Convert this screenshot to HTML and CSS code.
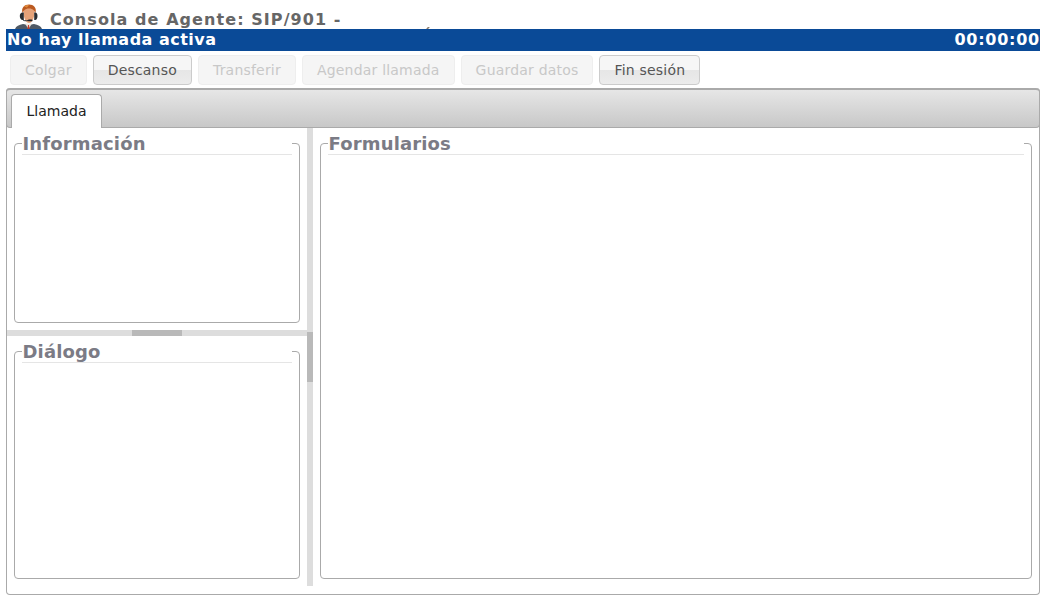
FILE: index.html
```html
<!DOCTYPE html>
<html lang="es">
<head>
<meta charset="utf-8">
<title>Consola de Agente</title>
<link rel="stylesheet" href="styles.css">
</head>
<body>
<header class="title-bar">
  <svg class="agent-icon" width="27" height="25" viewBox="0 0 27 25" aria-hidden="true">
    <path d="M0 25c1-3 4-4 8-5l5.500 1 5.500-1c4 1 7 2 8 5z" fill="#4f5964"/>
    <path d="M10 19.500l3.500 5.500 3.500-5.500z" fill="#f0e8de"/>
    <path d="M13 21h1l.6 4h-2.200z" fill="#c23a28"/>
    <path d="M8.500 8c0-4 2-5 5.500-5s5.500 1 5.500 5c0 6-2.500 11-5.500 11s-5.500-5-5.500-11z" fill="#e5a279"/>
    <path d="M7.500 9c-1.500-5.500 2-8.500 6.500-8.500s8 3 6.500 8.500l-1.500-2.500c-1.500-1.500-3-2-5-2s-3.500.5-5 2z" fill="#bb5a20"/>
    <path d="M9 2.500c1.500-1.200 3-1.500 5-1.500l-2 2.500z" fill="#e08a3c"/>
    <path d="M7.800 8.500c-2 0-3 1.500-3 3.500s1 4 3 4h1v-7.500zM20.200 8.500c1.500 0 2.300 1.500 2.300 3.500s-.8 4-2.300 4h-1v-7.500z" fill="#2a2e33"/>
    <path d="M7.500 15.500c.8 1.300 3 1.500 6 1" fill="none" stroke="#2a2e33" stroke-width="1"/>
    <rect x="13" y="15.500" width="4.500" height="1.800" rx=".9" fill="#1d2125"/>
  </svg>
  <h1 class="title">Consola de Agente: SIP/901 -</h1>
  <span class="clipped-accent"></span>
</header>
<div class="status-bar">
  <span class="status-text">No hay llamada activa</span>
  <span class="status-time">00:00:00</span>
</div>
<nav class="toolbar">
  <button class="btn" disabled>Colgar</button>
  <button class="btn">Descanso</button>
  <button class="btn" disabled>Transferir</button>
  <button class="btn" disabled>Agendar llamada</button>
  <button class="btn" disabled>Guardar datos</button>
  <button class="btn">Fin sesión</button>
</nav>
<main class="tabs">
  <div class="tab-strip">
    <div class="tab">Llamada</div>
  </div>
  <div class="tab-panel">
    <div class="left-pane">
      <div class="pane-top">
        <fieldset class="box"><legend>Información</legend></fieldset>
      </div>
      <div class="h-split"><span class="h-handle"></span></div>
      <div class="pane-bottom">
        <fieldset class="box"><legend>Diálogo</legend></fieldset>
      </div>
    </div>
    <div class="v-split"><span class="v-handle"></span></div>
    <div class="right-pane">
      <fieldset class="box"><legend>Formularios</legend></fieldset>
    </div>
  </div>
</main>
</body>
</html>
```
FILE: styles.css
```css
* { box-sizing: border-box; }
html, body { height: 100%; }
body {
  margin: 0;
  padding: 0 8px 0 6px;
  overflow: hidden;
  background: #fff;
  font-family: "DejaVu Sans", Verdana, sans-serif;
  display: flex;
  flex-direction: column;
}
.title-bar {
  position: relative;
  height: 29px;
  padding-left: 9px;
  display: flex;
  align-items: flex-start;
  overflow: hidden;
  flex: none;
}
.agent-icon { margin-top: 4px; flex: none; }
.title {
  margin: 10px 0 0 8px;
  font-size: 16px;
  line-height: 20px;
  font-weight: 700;
  letter-spacing: 1.07px;
  color: #666;
}
.clipped-accent {
  position: absolute;
  left: 421px;
  top: 27px;
  width: 2px;
  height: 2px;
  background: #8a7a6a;
  transform: skewX(-40deg);
}
.status-bar {
  flex: none;
  height: 22px;
  background: #0a4a97;
  color: #fff;
  font-size: 16px;
  line-height: 22px;
  font-weight: 700;
  display: flex;
  justify-content: space-between;
  padding-left: 1px;
}
.status-text { letter-spacing: .48px; }
.status-time { letter-spacing: .75px; }
.toolbar {
  flex: none;
  display: flex;
  gap: 6px;
  padding: 4px 0 3px 4px;
}
.btn {
  height: 30px;
  padding: 0 14px;
  font: 14px "DejaVu Sans", Verdana, sans-serif;
  letter-spacing: .2px;
  color: #555;
  border: 1px solid #ccc;
  border-radius: 4px;
  background: linear-gradient(#f6f6f6 50%, #e6e6e6 50%, #ececec);
}
.btn:disabled {
  color: #c8c8c8;
  border-color: #eee;
  background: #f5f5f5;
}
.tabs {
  flex: none;
  height: 507px;
  border: 1px solid #aaa;
  border-top: 0;
  border-radius: 4px;
  display: flex;
  flex-direction: column;
}
.tab-strip {
  flex: none;
  height: 40px;
  margin: 0 -1px;
  padding: 4px 0 0 4px;
  border: 1px solid #aaa;
  border-top-width: 2px;
  border-radius: 4px;
  background: linear-gradient(#e6e6e6, #c8c8c8);
  display: flex;
}
.tab {
  width: 91px;
  height: 34px;
  background: #fff;
  border: 1px solid #aaa;
  border-bottom: 0;
  border-radius: 4px 4px 0 0;
  font-size: 14px;
  line-height: 33px;
  text-align: center;
  color: #222;
}
.tab-panel {
  flex: 1;
  display: flex;
  padding-bottom: 8px;
}
.left-pane {
  flex: none;
  width: 300px;
  display: flex;
  flex-direction: column;
}
.pane-top { flex: none; height: 202px; padding: 4px 7px 7px; display: flex; }
.pane-bottom { flex: 1; padding: 4px 7px 7px; display: flex; }
.right-pane { flex: 1; padding: 4px 7px 7px; display: flex; }
.h-split {
  flex: none;
  height: 6px;
  background: #ddd;
  display: flex;
  justify-content: center;
}
.h-handle { width: 50px; background: #b9b9b9; }
.v-split {
  flex: none;
  width: 6px;
  background: #ddd;
  padding-top: 204px;
}
.v-handle { display: block; height: 50px; background: #b9b9b9; }
.box {
  flex: 1;
  min-width: 0;
  margin: 0;
  padding: 0 7px;
  border: 1px solid #aaa;
  border-radius: 4px;
}
.box legend {
  width: 100%;
  height: 23px;
  padding: 1px 0 0 .5px;
  font-size: 18px;
  line-height: 21px;
  font-weight: 700;
  letter-spacing: .15px;
  color: #7b7b85;
  border-bottom: 1px solid #e5e5e5;
}
```
